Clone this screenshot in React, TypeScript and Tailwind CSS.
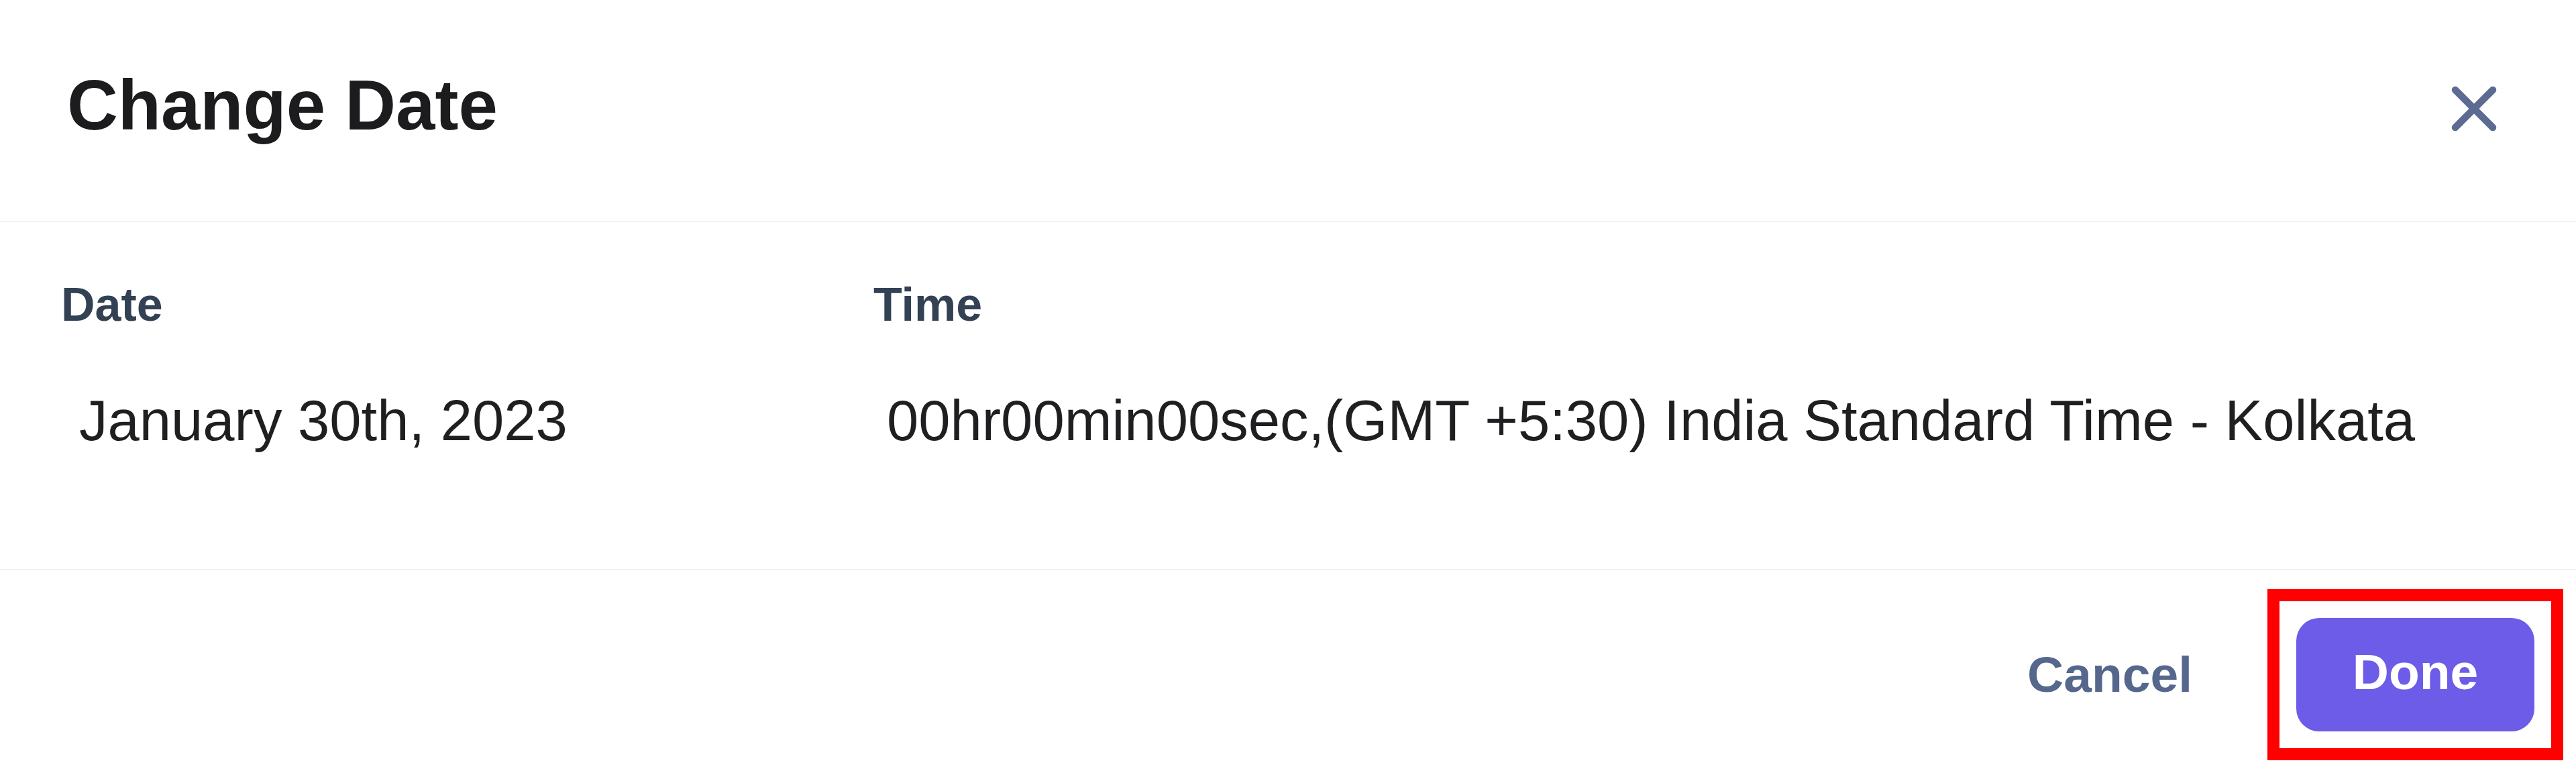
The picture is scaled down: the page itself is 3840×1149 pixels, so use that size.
import React from "react";

function CloseIcon() {
  return (
    <svg width="68" height="68" viewBox="0 0 68 68" fill="none" aria-hidden="true">
      <path d="M6 6L62 62M62 6L6 62" stroke="#5b6b91" strokeWidth="10.5" strokeLinecap="round" />
    </svg>
  );
}

export default function App() {
  return (
    <div className="w-[3840px] h-[1149px] bg-white font-['Liberation_Sans',Arial,sans-serif] overflow-hidden">
      {/* header */}
      <div className="flex h-[331px] items-start justify-between border-b-2 border-[#eef1f6] pl-[100px] pr-[118px]">
        <h2 className="mt-[104px] text-[105px] leading-none font-bold text-[#1c1c1f]">Change Date</h2>
        <button className="mt-[128px]">
          <CloseIcon />
        </button>
      </div>

      {/* body */}
      <div className="flex h-[519px] border-b-2 border-[#eef1f6] pt-[88px] pl-[91px]">
        <div className="w-[1211px]">
          <div className="text-[70px] leading-none font-bold text-[#334155]">Date</div>
          <div className="mt-[95px] ml-[27px] text-[85px] leading-none text-[#1f1f22]">January 30th, 2023</div>
        </div>
        <div>
          <div className="text-[70px] leading-none font-bold text-[#334155]">Time</div>
          <div className="mt-[95px] ml-[20px] text-[85px] leading-none text-[#1f1f22]">
            00hr00min00sec,(GMT +5:30) India Standard Time - Kolkata
          </div>
        </div>
      </div>

      {/* footer */}
      <div className="flex items-start justify-end pt-[28px] pr-[19px]">
        <div className="flex items-center">
          <button className="mr-[112px] text-[75px] leading-none font-bold text-[#56678d]">Cancel</button>
          <div className="border-[18px] border-[#ff0000] p-[25px]">
            <button className="flex h-[169px] w-[355px] items-center justify-center rounded-[34px] bg-[#6c5ce7] pb-[8px] text-[75px] leading-none font-bold text-white">
              Done
            </button>
          </div>
        </div>
      </div>
    </div>
  );
}
